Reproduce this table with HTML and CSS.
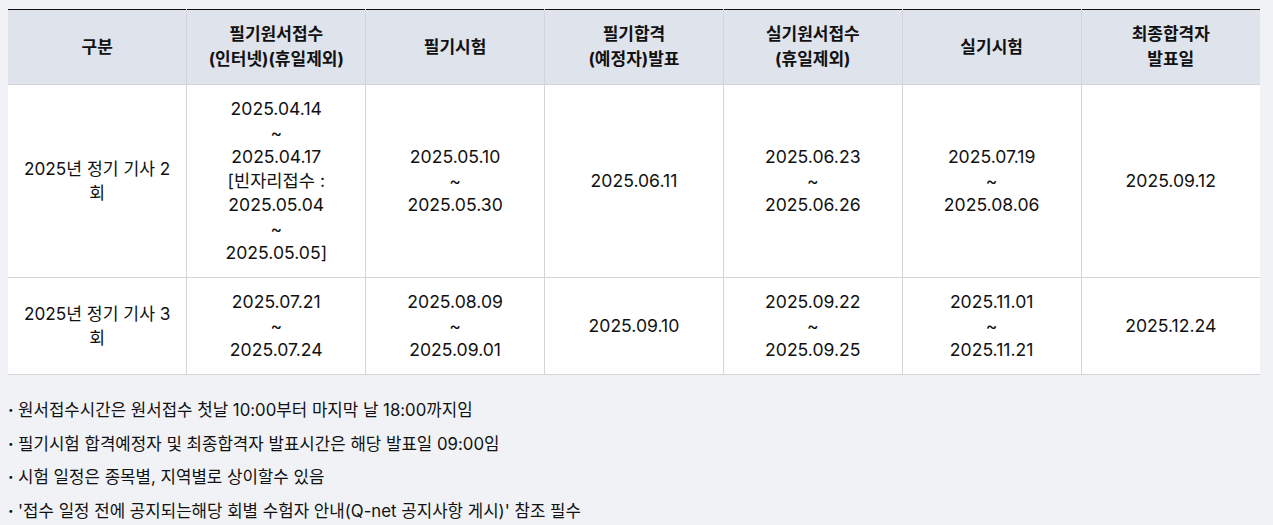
FILE: index.html
```html
<!DOCTYPE html>
<html lang="ko">
<head>
<meta charset="utf-8">
<link rel="stylesheet" href="styles.css">
</head>
<body>
<table class="schedule">
  <thead>
    <tr>
      <th>구분</th>
      <th>필기원서접수<br>(인터넷)(휴일제외)</th>
      <th>필기시험</th>
      <th>필기합격<br>(예정자)발표</th>
      <th>실기원서접수<br>(휴일제외)</th>
      <th>실기시험</th>
      <th>최종합격자<br>발표일</th>
    </tr>
  </thead>
  <tbody>
    <tr>
      <td class="round">2025년 정기 기사 2<br>회</td>
      <td>2025.04.14<br>~<br>2025.04.17<br>[빈자리접수 :<br>2025.05.04<br>~<br>2025.05.05]</td>
      <td>2025.05.10<br>~<br>2025.05.30</td>
      <td>2025.06.11</td>
      <td>2025.06.23<br>~<br>2025.06.26</td>
      <td>2025.07.19<br>~<br>2025.08.06</td>
      <td>2025.09.12</td>
    </tr>
    <tr>
      <td class="round">2025년 정기 기사 3<br>회</td>
      <td>2025.07.21<br>~<br>2025.07.24</td>
      <td>2025.08.09<br>~<br>2025.09.01</td>
      <td>2025.09.10</td>
      <td>2025.09.22<br>~<br>2025.09.25</td>
      <td>2025.11.01<br>~<br>2025.11.21</td>
      <td>2025.12.24</td>
    </tr>
  </tbody>
</table>
<ul class="notes">
  <li>원서접수시간은 원서접수 첫날 10:00부터 마지막 날 18:00까지임</li>
  <li>필기시험 합격예정자 및 최종합격자 발표시간은 해당 발표일 09:00임</li>
  <li>시험 일정은 종목별, 지역별로 상이할수 있음</li>
  <li>'접수 일정 전에 공지되는해당 회별 수험자 안내(Q-net 공지사항 게시)' 참조 필수</li>
</ul>
</body>
</html>
```
FILE: styles.css
```css
html, body {
  margin: 0;
  padding: 0;
}
body {
  background: #f0f2f6;
  padding: 9px 8px 0 8px;
  font-family: Inter, "Noto Sans CJK KR", sans-serif;
  color: #111;
}
.schedule {
  width: 1252px;
  border-collapse: collapse;
  table-layout: fixed;
  background: #fff;
  border-top: 1px solid #111;
}
.schedule th,
.schedule td {
  text-align: center;
  vertical-align: middle;
  border-right: 1px solid #d3d5d9;
  border-bottom: 1px solid #d3d5d9;
}
.schedule th:last-child,
.schedule td:last-child {
  border-right: none;
}
.schedule th {
  background: #dfe3eb;
  font-size: 17px;
  font-weight: 700;
  line-height: 25px;
  padding: 12px 4px;
  height: 50px;
}
.schedule td {
  font-size: 17.6px;
  line-height: 24px;
  padding: 12px 4px;
}
.schedule td.round {
  font-size: 17.2px;
}
.notes {
  list-style: none;
  margin: 23px 0 0 0;
  padding: 0;
}
.notes li {
  display: flex;
  gap: 6px;
  font-size: 16.8px;
  line-height: 24px;
  margin-bottom: 9.6px;
}
.notes li::before {
  content: "·";
  width: 4px;
  font-weight: 700;
}
```
